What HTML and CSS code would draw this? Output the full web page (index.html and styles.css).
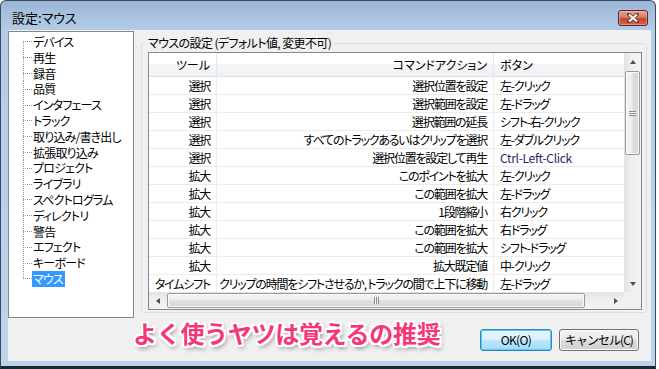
FILE: index.html
```html
<!DOCTYPE html>
<html>
  <head>
    <meta charset="utf-8">
    <title>設定:マウス</title>
    <link rel="stylesheet" href="styles.css">
  </head>
  <body>
    <div class="window">
      <div class="titlebar">
        <span class="title">設定:マウス</span>
        <div class="close">
          <svg width="12" height="10" viewBox="0 0 12 10">
            <path d="M2 1.5 L10 8.5 M10 1.5 L2 8.5" stroke="#5a3030" stroke-width="3.6" stroke-linecap="round"/>
            <path d="M2 1.5 L10 8.5 M10 1.5 L2 8.5" stroke="#ffffff" stroke-width="2"/>
          </svg>
        </div>
      </div>
      <div class="client">
        <div class="main">
          <ul class="tree">
            <li class="first">デバイス</li>
            <li>再生</li>
            <li>録音</li>
            <li>品質</li>
            <li>インタフェース</li>
            <li>トラック</li>
            <li>取り込み/書き出し</li>
            <li>拡張取り込み</li>
            <li>プロジェクト</li>
            <li>ライブラリ</li>
            <li>スペクトログラム</li>
            <li>ディレクトリ</li>
            <li>警告</li>
            <li>エフェクト</li>
            <li>キーボード</li>
            <li class="last"><span class="sel">マウス</span></li>
          </ul>
          <fieldset class="group">
            <legend>マウスの設定 (デフォルト値, 変更不可)</legend>
            <div class="listview">
              <div class="listbody">
                <table class="grid">
                  <colgroup>
                    <col class="c-tool">
                    <col class="c-cmd">
                    <col class="c-btn">
                  </colgroup>
                  <thead>
                    <tr><th class="r">ツール</th><th class="r">コマンドアクション</th><th>ボタン</th></tr>
                  </thead>
                  <tbody>
                    <tr><td class="r">選択</td><td class="r">選択位置を設定</td><td>左-クリック</td></tr>
                    <tr><td class="r">選択</td><td class="r">選択範囲を設定</td><td>左-ドラッグ</td></tr>
                    <tr><td class="r">選択</td><td class="r">選択範囲の延長</td><td>シフト-右-クリック</td></tr>
                    <tr><td class="r">選択</td><td class="r">すべてのトラックあるいはクリップを選択</td><td>左-ダブルクリック</td></tr>
                    <tr><td class="r">選択</td><td class="r">選択位置を設定して再生</td><td class="latin">Ctrl-Left-Click</td></tr>
                    <tr><td class="r">拡大</td><td class="r">このポイントを拡大</td><td>左-クリック</td></tr>
                    <tr><td class="r">拡大</td><td class="r">この範囲を拡大</td><td>左-ドラッグ</td></tr>
                    <tr><td class="r">拡大</td><td class="r">1段階縮小</td><td>右クリック</td></tr>
                    <tr><td class="r">拡大</td><td class="r">この範囲を拡大</td><td>右ドラッグ</td></tr>
                    <tr><td class="r">拡大</td><td class="r">この範囲を拡大</td><td>シフト-ドラッグ</td></tr>
                    <tr><td class="r">拡大</td><td class="r">拡大既定値</td><td>中-クリック</td></tr>
                    <tr><td class="r">タイムシフト</td><td class="r">クリップの時間をシフトさせるか, トラックの間で上下に移動</td><td>左-ドラッグ</td></tr>
                  </tbody>
                </table>
              </div>
              <div class="vscroll">
                <div class="arrow"><i class="tri up"></i></div>
                <div class="vtrack">
                  <div class="vthumb"><i class="grip-h"></i></div>
                </div>
                <div class="arrow"><i class="tri down"></i></div>
              </div>
              <div class="hscroll">
                <div class="arrow"><i class="tri left"></i></div>
                <div class="htrack">
                  <div class="hthumb"><i class="grip-v"></i></div>
                </div>
                <div class="arrow"><i class="tri right"></i></div>
              </div>
              <div class="corner"></div>
            </div>
          </fieldset>
        </div>
        <div class="footer">
          <div class="note">よく使うヤツは覚えるの推奨</div>
          <div class="buttons">
            <button class="btn default">OK(O)</button>
            <button class="btn cancel">キャンセル(C)</button>
          </div>
        </div>
      </div>
    </div>
  </body>
</html>
```

FILE: styles.css
```css
body{
  margin:0;
  background:#fff;
  font-family:"Noto Sans CJK JP", sans-serif;
  font-size:12px;
  color:#000;
  font-feature-settings:"palt";
}
.window{
  width:656px;
  height:369px;
  box-sizing:border-box;
  border:1px solid #3b4a5a;
  border-bottom:3px solid #1d2831;
  border-radius:6px 6px 0 0;
  background:linear-gradient(#9bb6d5 0, #a7c1de 14px, #b4cce6 30px, #bcd4ec 100%);
  display:flex;
  flex-direction:column;
}
.titlebar{
  height:29px;
  display:flex;
  align-items:flex-start;
}
.title{
  margin:9px 0 0 11px;
  font-size:13px;
  line-height:16px;
  flex:1;
}
.close{
  margin:9px 7px 0 0;
  width:30px;
  height:16px;
  box-sizing:border-box;
  border:1px solid #5b2626;
  border-radius:3px;
  background:linear-gradient(#e6a493 0, #d77a63 45%, #c4452f 55%, #cf6a50 100%);
  box-shadow:inset 0 0 0 1px rgba(255,200,190,.45);
  display:flex;
  align-items:center;
  justify-content:center;
}
.close svg{
  display:block;
}
.client{
  margin:0 4px 0 7px;
  height:331px;
  background:#f0f0f0;
  display:flex;
  flex-direction:column;
}
.main{
  height:288px;
  display:flex;
  align-items:flex-start;
}

/* tree */
.tree{
  margin:1px 0 0 0;
  padding:2px 0 0 0;
  width:126px;
  height:287px;
  box-sizing:border-box;
  border:1px solid #828790;
  background:#fff;
  list-style:none;
  letter-spacing:-0.8px;
}
.tree li{
  margin-left:14px;
  padding-left:10px;
  height:15.8px;
  line-height:15.8px;
  white-space:nowrap;
  background-image:
    repeating-linear-gradient(to bottom, #9a9a9a 0 1px, transparent 1px 2px),
    repeating-linear-gradient(to right, #9a9a9a 0 1px, transparent 1px 2px);
  background-size:1px 100%, 9px 1px;
  background-position:0 0, 0 50%;
  background-repeat:no-repeat;
}
.tree li.first{
  background-size:1px 50%, 9px 1px;
  background-position:0 100%, 0 50%;
}
.tree li.last{
  background-size:1px 8px, 9px 1px;
  background-position:0 0, 0 50%;
}
.sel{
  display:inline-block;
  margin-left:-1px;
  padding:0 2px 0 1px;
  line-height:16px;
  background:#3399ff;
  color:#fff;
}

/* group box */
.group{
  margin:6px 0 0 7px;
  padding:2px 4px 0 6px;
  width:506px;
  height:277px;
  box-sizing:border-box;
  border:1px solid #d5dfe5;
  border-radius:3px;
  min-width:0;
}
.group legend{
  margin-left:-3px;
  padding:0 3px;
  line-height:14px;
  font-size:12px;
  letter-spacing:-0.6px;
}
.listview{
  width:494px;
  height:258px;
  box-sizing:border-box;
  border:1px solid #828790;
  background:#fff;
  display:grid;
  grid-template-columns:475px 17px;
  grid-template-rows:239px 17px;
}
.listbody{
  overflow:hidden;
}
.grid{
  table-layout:fixed;
  border-collapse:separate;
  border-spacing:0;
  width:505px;
}
.c-tool{ width:68px; }
.c-cmd{ width:277px; }
.c-btn{ width:160px; }
.grid th, .grid td{
  box-sizing:border-box;
  padding:0 0 0 6px;
  white-space:nowrap;
  overflow:hidden;
  font-weight:normal;
  text-align:left;
  border-right:1px solid #ececec;
  border-bottom:1px solid #ececec;
  line-height:17px;
}
.grid td{
  letter-spacing:-1.2px;
}
.grid th{
  line-height:23px;
  border-bottom:1px solid #dcdfe3;
  border-right:1px solid #e3e8ee;
  background:linear-gradient(#ffffff 0, #ffffff 50%, #f4f5f7 50%, #f1f2f4 100%);
}
.grid .r{
  text-align:right;
  padding:0 6px 0 0;
}
.grid td.latin{
  color:#26266a;
  letter-spacing:-0.3px;
}

/* scrollbars */
.vscroll{
  display:flex;
  flex-direction:column;
  background:linear-gradient(to right, #e2e2e2, #eeeeee 40%, #f3f3f3);
}
.arrow{
  width:17px;
  height:17px;
  flex:none;
  display:flex;
  align-items:center;
  justify-content:center;
}
.tri{
  width:0;
  height:0;
  border-style:solid;
  border-color:transparent;
}
.tri.up{ border-width:0 3px 4px 3px; border-bottom-color:#505050; }
.tri.down{ border-width:4px 3px 0 3px; border-top-color:#505050; }
.tri.left{ border-width:3px 4px 3px 0; border-right-color:#505050; }
.tri.right{ border-width:3px 0 3px 4px; border-left-color:#505050; }
.vtrack{
  flex:1;
}
.vthumb{
  margin:1px 0 0 1px;
  width:15px;
  height:84px;
  box-sizing:border-box;
  border:1px solid #9a9a9a;
  border-radius:2px;
  background:linear-gradient(to right, #f4f4f4 0, #ececec 45%, #dedede 55%, #d6d6d6 100%);
  box-shadow:inset 0 0 0 1px #fbfbfb;
  display:flex;
  align-items:center;
  justify-content:center;
}
.grip-h{
  width:7px;
  height:5px;
  background:repeating-linear-gradient(to bottom, #8a8a8a 0 1px, #f8f8f8 1px 2px);
}
.hscroll{
  display:flex;
  background:linear-gradient(#e2e2e2, #eeeeee 40%, #f3f3f3);
}
.htrack{
  flex:1;
}
.hthumb{
  margin:1px 0 0 1px;
  width:418px;
  height:15px;
  box-sizing:border-box;
  border:1px solid #9a9a9a;
  border-radius:2px;
  background:linear-gradient(#f4f4f4 0, #ececec 45%, #dedede 55%, #d6d6d6 100%);
  box-shadow:inset 0 0 0 1px #fbfbfb;
  display:flex;
  align-items:center;
  justify-content:center;
}
.grip-v{
  width:5px;
  height:7px;
  background:repeating-linear-gradient(to right, #8a8a8a 0 1px, #f8f8f8 1px 2px);
}
.corner{
  background:#f0f0f0;
}

/* footer */
.footer{
  flex:1;
  display:flex;
  align-items:flex-start;
}
.note{
  margin:1px 0 0 125px;
  font-size:24px;
  line-height:28px;
  font-weight:bold;
  letter-spacing:-0.3px;
  color:#f5367a;
  font-feature-settings:normal;
  text-shadow:
    1px 0 0 #fff, -1px 0 0 #fff, 0 1px 0 #fff, 0 -1px 0 #fff,
    2px 0 0 #fff, -2px 0 0 #fff, 0 2px 0 #fff, 0 -2px 0 #fff,
    1px 1px 0 #fff, -1px -1px 0 #fff, 1px -1px 0 #fff, -1px 1px 0 #fff,
    2px 2px 0 #fff, -2px -2px 0 #fff, 2px -2px 0 #fff, -2px 2px 0 #fff,
    2px 3px 5px rgba(0,0,0,.55);
}
.buttons{
  margin:11px 12px 0 auto;
  display:flex;
  gap:7px;
}
.btn{
  height:22px;
  box-sizing:border-box;
  padding:0;
  font-family:"Noto Sans CJK JP", sans-serif;
  font-size:12px;
  line-height:18px;
  color:#000;
  letter-spacing:-0.6px;
  border:1px solid #707070;
  border-radius:3px;
  background:linear-gradient(#f2f2f2 0, #ebebeb 50%, #dddddd 50%, #cfcfcf 100%);
  box-shadow:inset 0 0 0 1px #fcfcfc;
}
.btn.default{
  width:72px;
  border-color:#3c7fb1;
  background:linear-gradient(#eaf6fd 0, #d9f0fc 50%, #bee6fd 50%, #a7d9f5 100%);
  box-shadow:inset 0 0 0 1px #48d4f8;
}
.btn.cancel{
  width:80px;
  letter-spacing:-1px;
}
```
